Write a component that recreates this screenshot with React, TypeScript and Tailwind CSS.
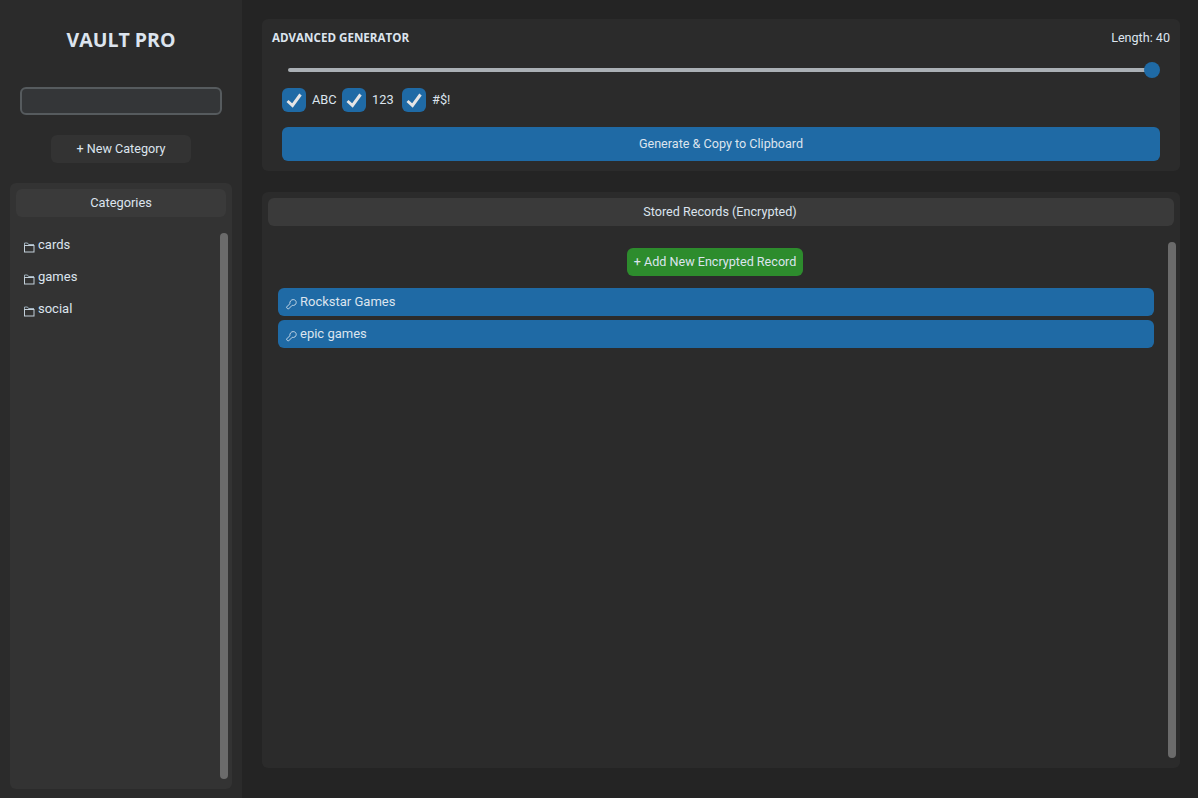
const roboto = "font-['Roboto',sans-serif]";

const FolderIcon = () => (
  <svg width="11" height="11" viewBox="0 0 11 11" fill="none" className="shrink-0">
    <path d="M0.5 3.5V1H3.5L4.5 2.5H10" stroke="#9fb0bd" strokeWidth="1" />
    <rect x="0.5" y="3.5" width="9.5" height="6.5" stroke="#c3d0da" strokeWidth="1" fill="none" />
  </svg>
);

const KeyIcon = () => (
  <svg width="11" height="11" viewBox="0 0 11 11" fill="none" className="shrink-0">
    <path
      d="M0.6 8L3.8 4.8C3.6 2.4 5.2 0.6 7.2 0.6C9 0.6 10.2 1.8 10.2 3.5C10.2 5.6 8.2 6.9 6.2 6.3L2.6 9.9C2 10.2 0.4 9.2 0.6 8Z"
      stroke="#c2d5e6"
      strokeWidth="1"
    />
  </svg>
);

const Check = ({ label }: { label: string }) => (
  <div className="flex w-[60px] items-center">
    <div className="h-6 w-6 rounded-md bg-[#1f6aa5]">
      <svg width="24" height="24" viewBox="0 0 24 24" fill="none">
        <path d="M5.5 13L10.5 17.5L18.5 6.5" stroke="#e5e5e5" strokeWidth="3" />
      </svg>
    </div>
    <span className="ml-1.5 text-[12.8px] text-[#dce4ee]">{label}</span>
  </div>
);

const categories = ["cards", "games", "social"];
const records = ["Rockstar Games", "epic games"];

export default function App() {
  return (
    <div className={`flex h-screen w-full overflow-hidden bg-[#242424] text-[13px] text-[#dce4ee] ${roboto}`}>
      <aside className="flex w-[242px] shrink-0 flex-col bg-[#2b2b2b] px-[10px] pb-[9px]">
        <h1 className="mt-[26px] h-7 text-center font-['Open_Sans',sans-serif] text-[19.5px] leading-7 font-bold">
          VAULT PRO
        </h1>
        <input className="mx-[10px] mt-[33px] h-7 rounded-md border-2 border-[#565b5e] bg-[#343638] outline-none" />
        <button type="button" className="mx-auto mt-5 h-7 w-[140px] rounded-md bg-[#333333] text-[12.6px]">
          + New Category
        </button>
        <div className="mt-5 flex min-h-0 flex-1 flex-col rounded-md bg-[#333333] p-1.5">
          <div className="flex h-7 shrink-0 items-center justify-center rounded-md bg-[#3a3a3a] text-[12.8px]">
            Categories
          </div>
          <div className="mt-4 flex min-h-0 flex-1 pb-1">
            <ul className="flex-1 pl-[8px]">
              {categories.map((name) => (
                <li key={name} className="flex h-8 items-center pb-[8px]">
                  <span className="mt-[5px]"><FolderIcon /></span>
                  <span className="ml-[3px]">{name}</span>
                </li>
              ))}
            </ul>
            <div className="-mr-0.5 w-2 rounded-sm bg-[#6b6b6b]" />
          </div>
        </div>
      </aside>

      <main className="flex min-w-0 flex-1 flex-col gap-[21px] pt-[19px] pr-[18px] pb-[30px] pl-5">
        <section className="h-[152px] shrink-0 rounded-md bg-[#2b2b2b] pt-[12px]">
          <div className="flex h-[14px] items-center justify-between px-[10px]">
            <span className="font-['Open_Sans',sans-serif] text-[11.6px] font-bold">ADVANCED GENERATOR</span>
            <span className="text-[12.6px]">Length: 40</span>
          </div>
          <div className="mt-[17px] ml-[26px] mr-5 flex h-4 items-center">
            <div className="h-1 flex-1 rounded-sm bg-[#aab0b5]" />
            <div className="-ml-2 h-4 w-4 rounded-full bg-[#1f6aa5]" />
          </div>
          <div className="mt-[10px] ml-5 flex items-center">
            <Check label="ABC" />
            <Check label="123" />
            <Check label="#$!" />
          </div>
          <button
            type="button"
            className="mt-[15px] ml-5 mr-5 block h-[34px] w-[878px] rounded-md bg-[#1f6aa5] text-[12.6px]"
          >
            Generate &amp; Copy to Clipboard
          </button>
        </section>

        <section className="flex min-h-0 flex-1 flex-col rounded-md bg-[#2b2b2b] p-1.5">
          <div className="flex h-7 shrink-0 items-center justify-center rounded-md bg-[#3a3a3a] pr-0.5 text-[12.6px]">
            Stored Records (Encrypted)
          </div>
          <div className="mt-4 flex min-h-0 flex-1 pb-1">
            <div className="flex flex-1 flex-col items-center pt-1.5 pl-[10px] pr-[14px]">
              <button type="button" className="mr-0.5 h-7 w-[176px] rounded-md bg-[#2d8c2d] text-[12.6px]">
                + Add New Encrypted Record
              </button>
              <div className="mt-3 flex w-full flex-col gap-1">
                {records.map((name) => (
                  <div key={name} className="flex h-7 items-center rounded-md bg-[#1f6aa5] pl-2">
                    <span className="mt-[5px]"><KeyIcon /></span>
                    <span className="ml-[3px]">{name}</span>
                  </div>
                ))}
              </div>
            </div>
            <div className="-mr-0.5 w-2 rounded-sm bg-[#6b6b6b]" />
          </div>
        </section>
      </main>
    </div>
  );
}
